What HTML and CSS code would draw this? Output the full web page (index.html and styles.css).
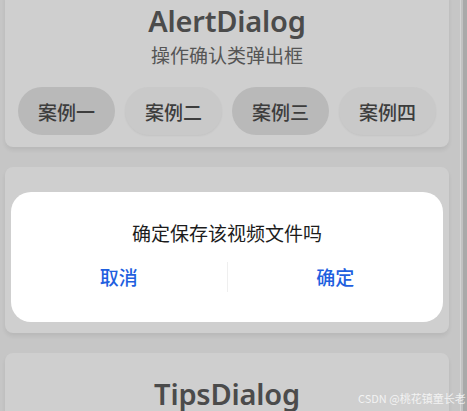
FILE: index.html
```html
<!DOCTYPE html>
<html lang="zh">
<head>
<meta charset="utf-8">
<link rel="stylesheet" href="styles.css">
</head>
<body>
<div class="page">
  <section class="card card-first">
    <h1 class="title">AlertDialog</h1>
    <p class="subtitle">操作确认类弹出框</p>
    <div class="pills">
      <span class="pill pill-dark">案例一</span>
      <span class="pill pill-light">案例二</span>
      <span class="pill pill-dark">案例三</span>
      <span class="pill pill-light">案例四</span>
    </div>
  </section>
  <section class="card card-middle"></section>
  <section class="card card-last">
    <h1 class="title">TipsDialog</h1>
  </section>
</div>
<div class="frame-edge"></div>
<div class="dialog">
  <p class="dialog-msg">确定保存该视频文件吗</p>
  <div class="dialog-actions">
    <span class="dialog-btn">取消</span>
    <span class="dialog-sep"></span>
    <span class="dialog-btn">确定</span>
  </div>
</div>
<div class="watermark">CSDN @桃花镇童长老</div>
</body>
</html>
```

FILE: styles.css
```css
html, body {
  margin: 0;
  padding: 0;
  width: 467px;
  height: 411px;
  overflow: hidden;
  background: #c6c6c6;
  font-family: "Noto Sans", "Noto Sans CJK SC", sans-serif;
}
.page {
  display: flex;
  flex-direction: column;
  gap: 20px;
  padding-left: 5px;
  width: 444px;
  margin-top: -10px;
}
.card {
  background: #cfcfcf;
  border-radius: 8px;
  box-shadow: 0 3px 4px rgba(0,0,0,0.07);
  display: flex;
  flex-direction: column;
  align-items: center;
}
.card-first {
  height: 157px;
  box-sizing: border-box;
  padding-top: 10px;
}
.card-middle {
  height: 166px;
}
.card-last {
  height: 100px;
  box-sizing: border-box;
  padding-top: 20px;
}
.title {
  margin: 0;
  font-family: "Noto Sans", sans-serif;
  font-weight: 600;
  font-size: 29px;
  line-height: 42px;
  color: #4b4b4b;
  letter-spacing: -0.2px;
}
.subtitle {
  margin: 0;
  font-family: "Noto Sans CJK SC", sans-serif;
  font-size: 19px;
  line-height: 26px;
  color: #555;
}
.pills {
  display: flex;
  gap: 10px;
  margin-top: 19px;
}
.pill {
  width: 97px;
  height: 48px;
  border-radius: 24px;
  display: flex;
  align-items: center;
  justify-content: center;
  font-family: "Noto Sans CJK SC", sans-serif;
  font-size: 19px;
  font-weight: 500;
  color: #3d3d3d;
}
.pill-dark {
  background: #b9b9b9;
}
.pill-light {
  background: #c9c9c9;
  box-shadow: 0 1px 2px rgba(0,0,0,0.06);
}
.frame-edge {
  position: absolute;
  top: 0;
  right: 0;
  width: 6px;
  height: 411px;
  border-left: 1px solid #d4d4d4;
  background: linear-gradient(to right, #c2c2c2 0 2px, #a9a9a9 2px);
}
.dialog {
  position: absolute;
  left: 11px;
  top: 192px;
  width: 432px;
  height: 130px;
  background: #fff;
  border-radius: 20px;
  display: flex;
  flex-direction: column;
  align-items: center;
  box-sizing: border-box;
  padding-top: 27px;
}
.dialog-msg {
  margin: 0;
  font-family: "Noto Sans CJK SC", sans-serif;
  font-size: 19px;
  font-weight: 400;
  line-height: 28px;
  color: #1c1c1c;
}
.dialog-actions {
  display: flex;
  align-items: center;
  width: 100%;
  margin-top: 15px;
}
.dialog-btn {
  flex: 1;
  text-align: center;
  font-family: "Noto Sans CJK SC", sans-serif;
  font-size: 19px;
  font-weight: 500;
  line-height: 30px;
  color: #1f5fdf;
}
.dialog-sep {
  width: 1px;
  height: 30px;
  background: #efefef;
}
.watermark {
  position: absolute;
  left: 358px;
  top: 390px;
  font-family: "Noto Sans CJK SC", sans-serif;
  font-size: 11px;
  line-height: 16px;
  color: rgba(255,255,255,0.75);
  white-space: nowrap;
}
```
